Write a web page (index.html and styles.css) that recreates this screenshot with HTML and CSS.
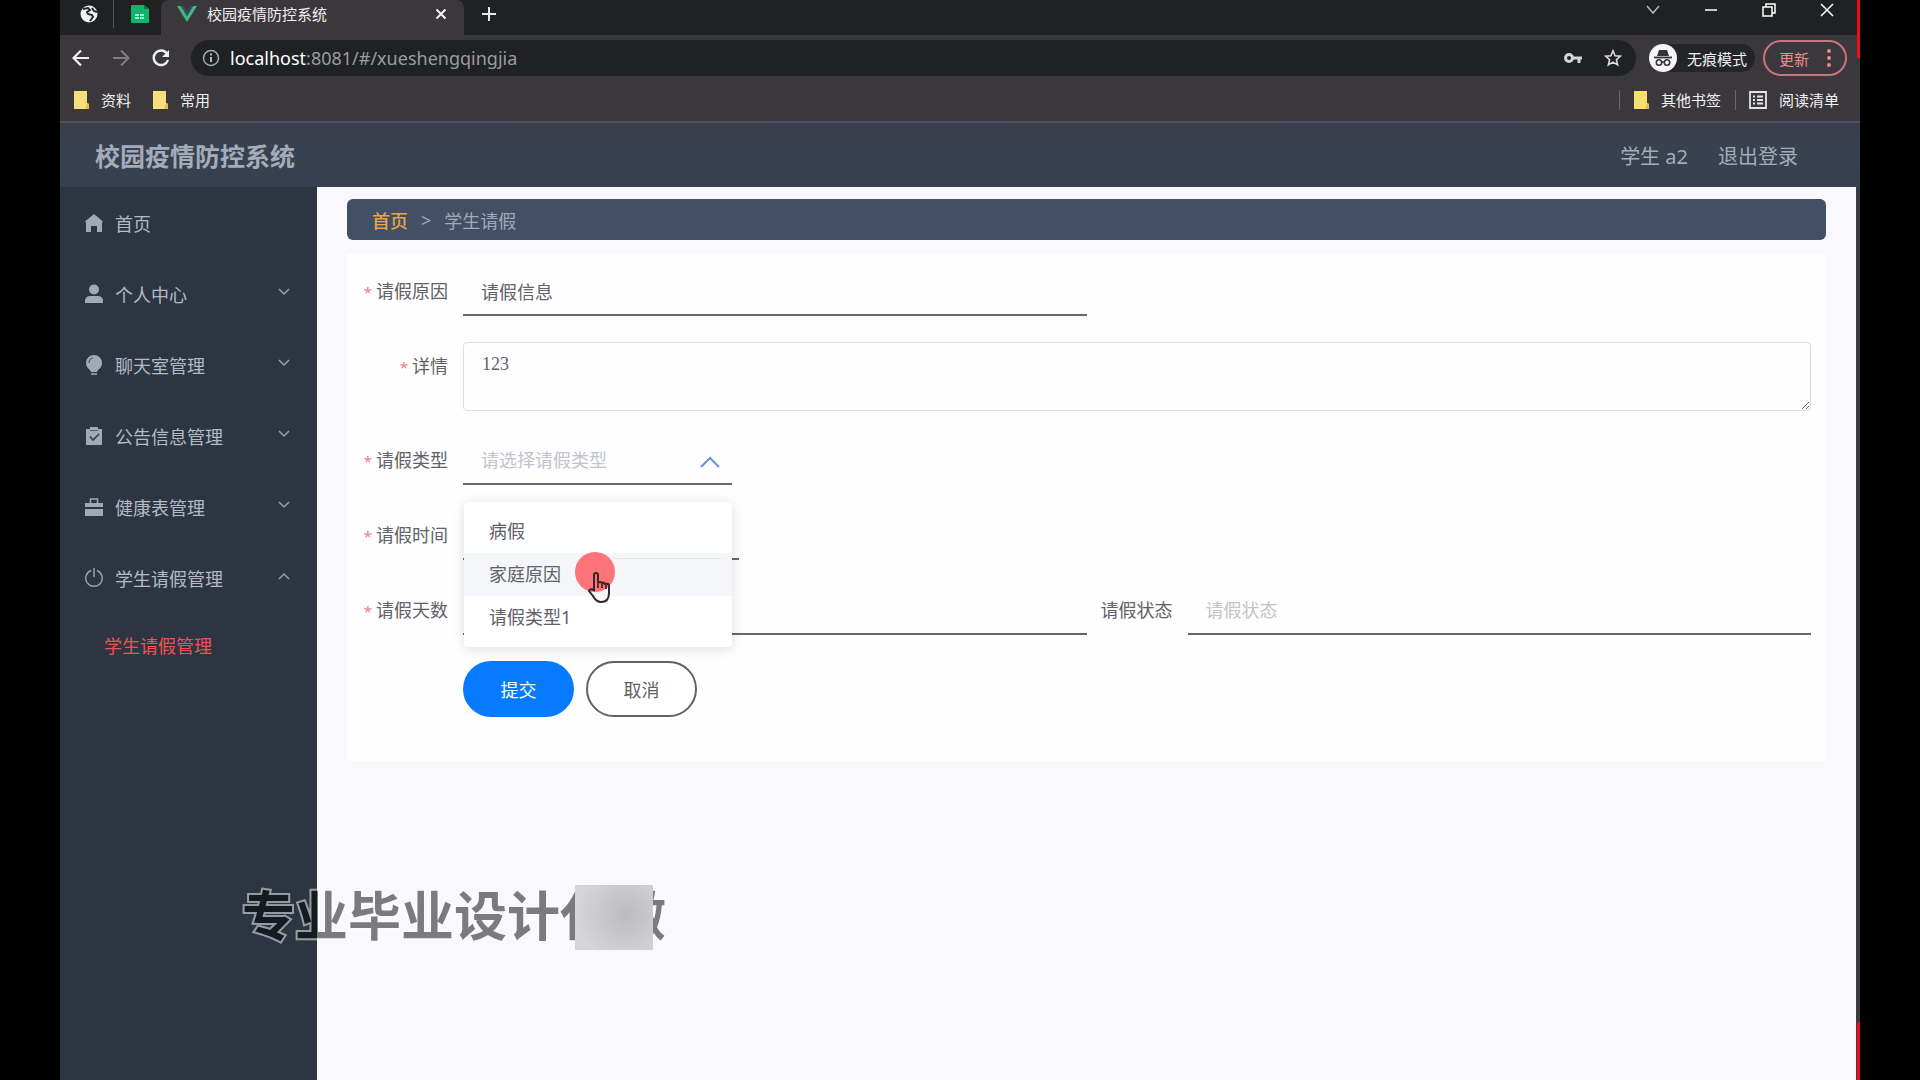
FILE: index.html
```
<!DOCTYPE html>
<html lang="zh-CN">
<head>
<meta charset="utf-8">
<meta name="viewport" content="width=device-width, initial-scale=1">
<title>校园疫情防控系统</title>
<link rel="stylesheet" href="styles.css">
</head>
<body>
<div class="screen">
  <div class="browser">
    <div class="tabs">
      <button class="mini-tab" aria-label="新标签页"><svg width="18" height="18" viewBox="0 0 18 18"><circle cx="9" cy="9" r="8.500" fill="#f1f1f1"/><path d="M3 4l5-1 2 2-3 2 1 2 4 1 1 2-3 4M12 3l2 3 3 1" fill="none" stroke="#26282a" stroke-width="2"/></svg></button>
      <button class="mini-tab mini-tab-divided" aria-label="表格"><svg width="18" height="18" viewBox="0 0 18 18"><path d="M1 0h12l5 4v13a1 1 0 0 1-1 1H1a1 1 0 0 1-1-1V1a1 1 0 0 1 1-1z" fill="#10b26c"/><path d="M13 0l5 4h-5z" fill="#087b49"/><path d="M4 10h10M4 13h10" stroke="#a8ecca" stroke-width="2" stroke-dasharray="4 1"/></svg></button>
      <div class="active-tab">
        <svg width="20" height="16" viewBox="0 0 20 16"><path d="M0 0h4l6 10 6-10h4L10 16z" fill="#41b883"/><path d="M4 0h3l3 5 3-5h3l-6 10z" fill="#34495e"/></svg>
        <span class="tab-title">校园疫情防控系统</span>
        <button class="icon-button" aria-label="关闭标签页"><svg width="12" height="12" viewBox="0 0 12 12"><path d="M1.500 1.500l9 9M10.500 1.500l-9 9" stroke="#f2f2f2" stroke-width="2"/></svg></button>
      </div>
      <button class="icon-button new-tab" aria-label="新建标签页"><svg width="16" height="16" viewBox="0 0 16 16"><path d="M8 1v14M1 8h14" stroke="#e8e8e8" stroke-width="2"/></svg></button>
      <div class="window-controls">
        <button class="icon-button" aria-label="搜索标签页"><svg width="14" height="14" viewBox="0 0 14 14"><path d="M1 3l6 7 6-7" fill="none" stroke="#b5b5b5" stroke-width="1.500"/></svg></button>
        <button class="icon-button" aria-label="最小化"><svg width="14" height="14" viewBox="0 0 14 14"><path d="M1 7h12" stroke="#fff" stroke-width="1.500"/></svg></button>
        <button class="icon-button" aria-label="还原"><svg width="14" height="14" viewBox="0 0 14 14"><path d="M1 4h9v9H1zM4 4V1h9v9h-3" fill="none" stroke="#fff" stroke-width="1.500"/></svg></button>
        <button class="icon-button" aria-label="关闭"><svg width="14" height="14" viewBox="0 0 14 14"><path d="M1 1l12 12M13 1L1 13" stroke="#fff" stroke-width="1.500"/></svg></button>
      </div>
    </div>
    <div class="toolbar">
      <div class="nav-buttons">
        <button class="icon-button" aria-label="后退"><svg width="18" height="18" viewBox="0 0 18 18"><path d="M17 9H2M9 1.500L1.500 9 9 16.500" fill="none" stroke="#f0f0f0" stroke-width="2.200"/></svg></button>
        <button class="icon-button" aria-label="前进"><svg width="18" height="18" viewBox="0 0 18 18"><path d="M1 9h15M9 1.500L16.500 9 9 16.500" fill="none" stroke="#7e7e80" stroke-width="2"/></svg></button>
        <button class="icon-button" aria-label="刷新"><svg width="18" height="18" viewBox="0 0 18 18"><path d="M15 4.500A7.300 7.300 0 1 0 16 11" fill="none" stroke="#f0f0f0" stroke-width="2.400"/><path d="M17 1v7h-7z" fill="#f0f0f0"/></svg></button>
      </div>
      <div class="address">
        <svg width="18" height="18" viewBox="0 0 18 18"><circle cx="9" cy="9" r="7.500" fill="none" stroke="#aaa" stroke-width="1.500"/><path d="M9 8v5M9 4.500v2" stroke="#bbb" stroke-width="2"/></svg>
        <span class="url"><span class="url-host">localhost</span>:8081/#/xueshengqingjia</span>
        <svg class="key" width="18" height="12" viewBox="0 0 18 12"><circle cx="5" cy="6" r="3.500" fill="none" stroke="#d5d5d5" stroke-width="3"/><path d="M9 6h9M15 6v5" stroke="#d5d5d5" stroke-width="3"/></svg>
        <svg width="18" height="18" viewBox="0 0 18 18"><path d="M9 1.800l2.100 4.900 5.300.5-4 3.500 1.200 5.200L9 13.100l-4.600 2.800 1.200-5.200-4-3.500 5.300-.5z" fill="none" stroke="#ddd" stroke-width="1.600"/></svg>
      </div>
      <div class="incognito">
        <svg width="28" height="28" viewBox="0 0 28 28"><circle cx="14" cy="14" r="14" fill="#f6f6f8"/><path d="M10 6h8l2 6H8z" fill="#333"/><path d="M5 13.500h18" stroke="#333" stroke-width="1.800"/><circle cx="10" cy="18.500" r="2.700" fill="none" stroke="#333" stroke-width="1.600"/><circle cx="18" cy="18.500" r="2.700" fill="none" stroke="#333" stroke-width="1.600"/><path d="M12.500 18h3" stroke="#333" stroke-width="1.500"/></svg>
        <span>无痕模式</span>
      </div>
      <button class="update">更新<svg width="4" height="18" viewBox="0 0 4 18"><g fill="#e98b8b"><circle cx="2" cy="2" r="2"/><circle cx="2" cy="9" r="2"/><circle cx="2" cy="16" r="2"/></g></svg></button>
    </div>
    <div class="bookmarks">
      <a href="#" class="bookmark"><svg width="15" height="18" viewBox="0 0 15 18"><path d="M0 0h13v12l2 1v5H0z" fill="#f9df7b"/><path d="M11 18l2-6 2 1v5z" fill="#e4bd4d"/></svg>资料</a>
      <a href="#" class="bookmark"><svg width="15" height="18" viewBox="0 0 15 18"><path d="M0 0h13v12l2 1v5H0z" fill="#f9df7b"/><path d="M11 18l2-6 2 1v5z" fill="#e4bd4d"/></svg>常用</a>
      <a href="#" class="bookmark bookmark-other"><svg width="15" height="18" viewBox="0 0 15 18"><path d="M0 0h13v12l2 1v5H0z" fill="#f9df6b"/><path d="M11 18l2-6 2 1v5z" fill="#e4bd4d"/></svg>其他书签</a>
      <a href="#" class="bookmark bookmark-divided"><svg width="18" height="18" viewBox="0 0 18 18"><path d="M1 1h16v16H1z" fill="none" stroke="#e5e5e5" stroke-width="1.800"/><path d="M4 5.500h2M8 5.500h6M4 9h2M8 9h6M4 12.500h2M8 12.500h6" stroke="#e5e5e5" stroke-width="1.800"/></svg>阅读清单</a>
    </div>
  </div>

  <header class="header">
    <h1 class="brand">校园疫情防控系统</h1>
    <span class="user">学生 a2</span>
    <a href="#" class="logout">退出登录</a>
  </header>

  <div class="body">
    <nav class="sidebar">
      <a href="#" class="menu-item"><svg width="18" height="18" viewBox="0 0 18 18"><path d="M9 0l9 7.500-1 1V18h-5v-6H6v6H1V8.500l-1-1z" fill="#a3a9b3"/></svg>首页</a>
      <a href="#" class="menu-item"><svg width="18" height="20" viewBox="0 0 18 20"><circle cx="9" cy="5.500" r="5" fill="#a3a9b3"/><path d="M0 19v-3q1-4 5-4h8q4 0 5 4v3z" fill="#a3a9b3"/></svg>个人中心<svg class="arrow" width="12" height="8" viewBox="0 0 12 8"><path d="M1 1l5 5 5-5" fill="none" stroke="#98a0ab" stroke-width="1.500"/></svg></a>
      <a href="#" class="menu-item"><svg width="18" height="20" viewBox="0 0 18 20"><path d="M9 0a8 8 0 0 1 8 8q0 4-4 7l-1 2H6l-1-2Q1 12 1 8a8 8 0 0 1 8-8z" fill="#a3a9b3"/><path d="M4 8q0-4 4-5" fill="none" stroke="#4c5663" stroke-width="1.200"/><path d="M6 19h6" stroke="#a3a9b3" stroke-width="1.500"/></svg>聊天室管理<svg class="arrow" width="12" height="8" viewBox="0 0 12 8"><path d="M1 1l5 5 5-5" fill="none" stroke="#98a0ab" stroke-width="1.500"/></svg></a>
      <a href="#" class="menu-item"><svg width="18" height="20" viewBox="0 0 18 20"><path d="M1 3h4V1h8v2h4v16H1z" fill="#a3a9b3"/><path d="M5 10.500l3 3.500 6-6" fill="none" stroke="#323c4a" stroke-width="1.600"/><path d="M5 4.500h8" stroke="#59626f"/></svg>公告信息管理<svg class="arrow" width="12" height="8" viewBox="0 0 12 8"><path d="M1 1l5 5 5-5" fill="none" stroke="#98a0ab" stroke-width="1.500"/></svg></a>
      <a href="#" class="menu-item"><svg width="18" height="18" viewBox="0 0 18 18"><path d="M0 5h18v4H0zM0 11h18v7H0z" fill="#a3a9b3"/><path d="M5.500 5V1h7v4" fill="none" stroke="#a3a9b3" stroke-width="1.500"/></svg>健康表管理<svg class="arrow" width="12" height="8" viewBox="0 0 12 8"><path d="M1 1l5 5 5-5" fill="none" stroke="#98a0ab" stroke-width="1.500"/></svg></a>
      <a href="#" class="menu-item"><svg width="18" height="20" viewBox="0 0 18 20"><path d="M6 2.500a8.200 8.200 0 1 0 6 0M9 0v9" fill="none" stroke="#98a0ab" stroke-width="1.500"/></svg>学生请假管理<svg class="arrow" width="12" height="8" viewBox="0 0 12 8"><path d="M1 7l5-5 5 5" fill="none" stroke="#98a0ab" stroke-width="1.500"/></svg></a>
      <a href="#" class="submenu-item">学生请假管理</a>
    </nav>

    <main class="main">
      <nav class="breadcrumb"><a href="#" class="crumb-home">首页</a><span>&gt;</span><span>学生请假</span></nav>
      <form class="form">
        <div class="field">
          <label class="label required" for="reason">请假原因</label>
          <input class="control" id="reason" type="text" value="请假信息">
        </div>
        <div class="field field-wide">
          <label class="label required" for="detail">详情</label>
          <textarea class="control detail" id="detail">123</textarea>
        </div>
        <div class="field field-wide">
          <label class="label required" for="type">请假类型</label>
          <div class="select-box">
            <select class="control select" id="type" required>
              <option value="" selected>请选择请假类型</option>
              <option>病假</option>
              <option>家庭原因</option>
              <option>请假类型1</option>
            </select>
            <svg class="select-arrow" width="20" height="12" viewBox="0 0 20 12"><path d="M1 11l9-9 9 9" fill="none" stroke="#6d90d8" stroke-width="2"/></svg>
            <ul class="menu">
              <li class="option">病假</li>
              <li class="option option-hover">家庭原因
                <span class="click-dot"></span>
                <svg class="pointer" width="24" height="32" viewBox="0 0 24 32"><path class="pointer-palm" d="M7 18V3q0-2 2-2t2 2v8q2-2 4 0 2-1 3 1 4-1 4 2v7q0 9-8 9-5 0-8-6l-4-5q1-3 5-1z"/><path d="M11 10v6M15 11v5M19 12v5" class="pointer-lines"/></svg>
              </li>
              <li class="option">请假类型1</li>
            </ul>
          </div>
        </div>
        <div class="field field-wide">
          <label class="label required" for="time">请假时间</label>
          <input class="control date" id="time" type="text">
        </div>
        <div class="field">
          <label class="label required" for="days">请假天数</label>
          <input class="control" id="days" type="text">
        </div>
        <div class="field">
          <label class="label" for="status">请假状态</label>
          <input class="control" id="status" type="text" placeholder="请假状态">
        </div>
        <div class="actions">
          <button class="button button-primary" type="submit">提交</button>
          <button class="button" type="button">取消</button>
        </div>
      </form>
    </main>
  </div>
  <div class="edge edge-top"></div>
  <div class="edge edge-bottom"></div>
  <div class="watermark"><span class="watermark-text">专业毕业设计代做</span><span class="mosaic"></span></div>
</div>
</body>
</html>
```
FILE: styles.css
```
* { box-sizing: border-box; }

body {
  margin: 0;
  background: #000;
  font-family: "Noto Sans", "Noto Sans CJK SC", sans-serif;
  font-size: 18px;
}

a { color: inherit; text-decoration: none; }
svg { display: block; flex: none; }
button, input, textarea, select { font: inherit; }

.screen {
  position: relative;
  display: flex;
  flex-direction: column;
  min-height: 100vh;
  margin: 0 60px;
  background: #3a383c;
}

/* Browser window */
.browser {
  border-bottom: 2px solid #50505f;
  color: #f0f0f0;
  font-size: 15px;
}

.icon-button, .mini-tab {
  display: flex;
  align-items: center;
  justify-content: center;
  padding: 0;
  border: 0;
  background: none;
}

.tabs {
  display: flex;
  height: 35px;
  background: #1f2122;
}

.mini-tab { width: 53px; height: 28px; padding-left: 4px; }
.mini-tab-divided { width: 48px; border-left: 1px solid #55585a; }

.active-tab {
  display: flex;
  align-items: center;
  gap: 10px;
  width: 303px;
  padding: 0 17px 8px 16px;
  border-radius: 8px 8px 0 0;
  background: #3a383c;
}

.tab-title { flex: 1; }
.new-tab { width: 50px; height: 28px; }

.window-controls {
  display: flex;
  gap: 44px;
  height: 20px;
  margin-left: auto;
  padding-right: 26px;
}

.toolbar {
  display: flex;
  align-items: center;
  height: 46px;
  padding-right: 13px;
}

.nav-buttons {
  display: flex;
  gap: 22px;
  width: 131px;
  padding-left: 12px;
}

.address {
  display: flex;
  flex: 1;
  align-items: center;
  gap: 10px;
  height: 36px;
  padding: 0 14px 0 11px;
  border-radius: 18px;
  background: #202124;
}

.url { flex: 1; color: #9b9b9f; font-size: 18px; }
.url-host { color: #fff; }
.key { margin-right: 12px; }

.incognito {
  display: flex;
  align-items: center;
  gap: 10px;
  height: 28px;
  margin: 0 8px 0 13px;
  padding-right: 8px;
  border-radius: 14px;
  background: #242528;
}

.update {
  display: flex;
  align-items: center;
  gap: 18px;
  height: 36px;
  padding: 0 14px;
  border: 2px solid #c77478;
  border-radius: 18px;
  background: none;
  color: #f08a8c;
}

.bookmarks {
  display: flex;
  align-items: center;
  gap: 22px;
  height: 40px;
  padding: 0 21px 3px 14px;
}

.bookmark { display: flex; align-items: center; gap: 12px; line-height: 20px; }
.bookmark-other { margin-left: auto; padding-left: 14px; border-left: 1px solid #6a6a6e; }
.bookmark-divided { margin-left: -8px; padding-left: 13px; border-left: 1px solid #6a6a6e; }

/* Application header */
.header {
  display: flex;
  align-items: center;
  gap: 30px;
  height: 64px;
  padding: 0 62px 0 35px;
  background: linear-gradient(#3c3c4d, #37414f 30%, #37404e);
  color: #a4abb9;
  font-size: 20px;
}

.brand { flex: 1; margin: 0; font-size: 25px; font-weight: 700; }

.body { display: flex; flex: 1; }

.sidebar {
  width: 257px;
  background: #2d3543;
  color: #b4bac4;
}

.menu-item {
  display: flex;
  align-items: center;
  gap: 12px;
  height: 71px;
  padding: 0 27px 0 25px;
}

.arrow { margin-left: auto; margin-bottom: 4px; }

.submenu-item {
  display: block;
  padding-left: 44px;
  color: #ee5252;
  line-height: 66px;
}

.main {
  flex: 1;
  padding: 12px 30px 30px;
  border-right: 4px solid #393c40;
  background: #f8f8fd;
}

.breadcrumb {
  display: flex;
  align-items: center;
  gap: 13px;
  height: 41px;
  padding: 0 25px;
  border-radius: 6px;
  background: #434f65;
  color: #a0aaba;
}

.crumb-home { color: #e8a550; font-weight: 500; }

/* Leave request form */
.form {
  display: grid;
  grid-template-columns: 1fr 1fr;
  row-gap: 25px;
  margin-top: 14px;
  padding: 13px 15px 44px;
  background: #fefeff;
}

.field { display: flex; }
.field-wide { grid-column: 1 / -1; }

.label {
  width: 101px;
  padding-right: 15px;
  color: #606268;
  line-height: 49px;
  text-align: right;
  white-space: nowrap;
}

.required::before { content: "*"; margin-right: 4px; color: #ee7c86; font-size: 15px; }

.control {
  flex: 1;
  min-width: 0;
  height: 49px;
  margin: 0;
  padding: 0 18px;
  border: 0;
  border-bottom: 2px solid #66676f;
  outline: 0;
  background: transparent;
  color: #606268;
}

.control::placeholder { color: #c2c3cb; }

.detail {
  height: 69px;
  padding: 11px 18px;
  border: 1px solid #dcdfe9;
  border-radius: 4px;
  font-family: "Liberation Serif", serif;
}

.select-box { position: relative; display: flex; width: 269px; }
.select { appearance: none; color: #c2c3cb; }
.select-arrow { position: absolute; right: 12px; top: 20px; }
.date { flex: 0 0 276px; }

.menu {
  position: absolute;
  z-index: 1;
  top: 66px;
  left: 1px;
  right: 0;
  margin: 0;
  padding: 8px 0;
  border-radius: 4px;
  background: #fff;
  box-shadow: 0 2px 12px rgba(0, 0, 0, 0.13);
  color: #606268;
  list-style: none;
}

.option { position: relative; height: 43px; padding: 0 25px; line-height: 43px; }

.option-hover {
  background: linear-gradient(#e4e5ea, #e4e5ea) 150px 5px / 107px 1px no-repeat #f5f6fa;
}

.click-dot {
  position: absolute;
  left: 111px;
  top: -1px;
  width: 40px;
  height: 40px;
  border-radius: 50%;
  background: #ff737a;
}

.pointer { position: absolute; left: 123px; top: 19px; }
.pointer-palm { fill: none; stroke: #33252b; stroke-width: 2; }
.pointer-lines { fill: none; stroke: #6b2831; stroke-width: 2; }

.actions { display: flex; gap: 12px; grid-column: 1 / -1; padding-left: 101px; }

.button {
  width: 111px;
  height: 56px;
  padding: 0;
  border: 2px solid #606268;
  border-radius: 28px;
  background: #fff;
  color: #606268;
}

.button-primary { border-color: #077bff; background: #077bff; color: #fff; }

/* Recorder frame marks and overlay caption */
.edge { position: absolute; right: 0; width: 3px; height: 58px; background: #ef0c12; }
.edge-top { top: 0; }
.edge-bottom { bottom: 0; }

.watermark { position: absolute; left: 182px; top: 885px; }

.watermark-text {
  display: block;
  color: #000;
  font-size: 53px;
  font-weight: 700;
  line-height: 62px;
  white-space: nowrap;
  opacity: 0.5;
  -webkit-text-stroke: 4px #fff;
  paint-order: stroke fill;
}

.mosaic {
  position: absolute;
  left: 333px;
  top: 0;
  width: 78px;
  height: 65px;
  background: radial-gradient(circle at 65% 45%, #bcbcbe, #d6d6d9 80%);
}
```
